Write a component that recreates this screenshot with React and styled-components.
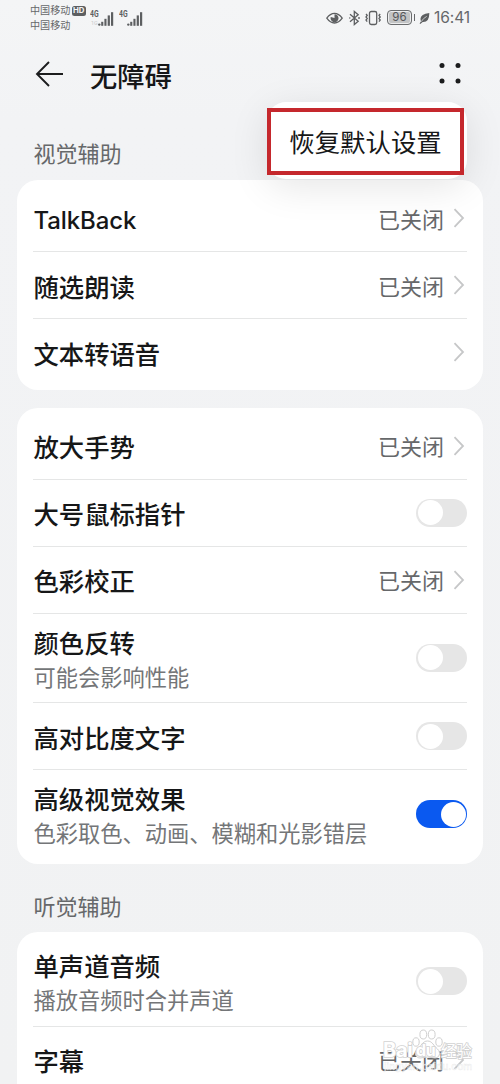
import React from 'react';
import styled, { createGlobalStyle } from 'styled-components';

const GlobalStyle = createGlobalStyle`
  * { box-sizing: border-box; }
  html, body { margin: 0; padding: 0; }
  body {
    width: 500px;
    height: 1084px;
    overflow: hidden;
    background: #f2f3f4;
    color: #161718;
    font-family: 'Noto Sans CJK SC', sans-serif;
  }
`;

const Screen = styled.main`
  position: relative;
  display: flex;
  flex-direction: column;
  width: 500px;
  height: 1084px;
  overflow: hidden;
  background: linear-gradient(180deg, #f4f5f6 0, #f2f3f5 120px, #f1f2f3 100%);
`;

const StatusBar = styled.header`
  display: flex;
  flex: none;
  justify-content: space-between;
  height: 36px;
  padding: 2px 28px 0 30px;
  color: #66686a;
`;

const StatusLeft = styled.div`
  display: flex;
  align-items: flex-start;
`;

const Carriers = styled.div`
  display: flex;
  flex-direction: column;
  font-size: 10.1px;
  line-height: 15.3px;
  width: 42px;
`;

const HdBadge = styled.span`
  flex: none;
  width: 13.5px;
  height: 9.5px;
  margin-top: 4px;
  border-radius: 2.5px;
  background: #5d5f61;
  color: #f4f5f6;
  font: 700 7.8px/9.5px Inter, sans-serif;
  text-align: center;
`;

const Signal = styled.svg`
  flex: none;
  width: 25px;
  height: 17px;
  margin: 7px 0 0 ${(p) => p.$gap}px;
`;

const StatusRight = styled.div`
  display: flex;
  align-items: center;
  height: 31px;
`;

const StatusIcon = styled.svg`
  flex: none;
  width: ${(p) => p.$w}px;
  height: 16px;
  margin-right: ${(p) => p.$gap}px;
`;

const Battery = styled.span`
  position: relative;
  width: 25px;
  height: 15px;
  margin-right: 7px;
  border: 1.3px solid #6a6c6e;
  border-radius: 4px;
  background: #c3c4c5;
  box-shadow: inset 0 0 0 1px #ecedee;
  color: #55575a;
  font: 400 11.5px/13px Inter, sans-serif;
  text-align: center;

  &::after {
    content: '';
    position: absolute;
    right: -4.2px;
    top: 3px;
    width: 1.7px;
    height: 6.5px;
    background: #66686a;
  }
`;

const Clock = styled.time`
  width: 38px;
  font: 400 15.6px/16px Inter, sans-serif;
  letter-spacing: -0.1px;
  white-space: nowrap;
`;

const TitleBar = styled.div`
  display: flex;
  flex: none;
  align-items: center;
  height: 77px;
  padding: 0 38px 0 35px;
`;

const BackIcon = styled.svg`
  width: 29px;
  height: 28px;
  margin-top: -1px;
`;

const PageTitle = styled.h1`
  flex: 1;
  margin: 0 0 0 26px;
  font-size: 27.3px;
  font-weight: 500;
  line-height: 40px;
`;

const MoreIcon = styled.svg`
  width: 24px;
  height: 24px;
  margin-bottom: 3px;
`;

const SectionTitle = styled.h2`
  display: flex;
  flex: none;
  align-items: flex-start;
  height: ${(p) => p.$height}px;
  margin: 0;
  padding: ${(p) => p.$top}px 34px 0 33.5px;
  color: #66686a;
  font-size: 22px;
  font-weight: 400;
  line-height: 32px;
`;

const Card = styled.section`
  flex: none;
  margin: 0 17px ${(p) => p.$gap || 0}px;
  padding: 5px 16px ${(p) => (p.$continues ? 40 : 4)}px;
  border-radius: 21px;
  background: #fff;
`;

const Row = styled.div`
  display: flex;
  align-items: center;
  justify-content: space-between;
  height: ${(p) => (p.$tall ? 89.5 : 66.9)}px;
  border-bottom: 1px solid #e5e6e6;

  &:last-child { border-bottom-color: transparent; }
`;

const Labels = styled.div`
  display: flex;
  flex-direction: column;
  padding: 1px 0 0 0.5px;
`;

const Label = styled.span`
  font-size: 25.35px;
  font-weight: 500;
  line-height: 36px;
  white-space: nowrap;
`;

const LatinLabel = styled(Label)`
  font-family: Inter, sans-serif;
  font-size: 24px;
  letter-spacing: -0.1px;
  padding-top: 5px;
`;

const Hint = styled.span`
  color: #747678;
  font-size: 22.25px;
  line-height: 33px;
  white-space: nowrap;
`;

const Value = styled.span`
  display: flex;
  align-items: center;
  padding-bottom: 1px;
  color: #66686a;
  font-size: 22px;
  line-height: 32px;
`;

const ChevronIcon = styled.svg`
  width: 12px;
  height: 20px;
  margin: 1px 2px 0 9px;
`;

const Track = styled.span`
  display: flex;
  justify-content: ${(p) => (p.$on ? 'flex-end' : 'flex-start')};
  width: 51px;
  height: 28px;
  padding: 1.5px;
  border-radius: 14px;
  background: ${(p) => (p.$on ? '#0a59f0' : '#e6e6e6')};
`;

const Thumb = styled.span`
  width: 25px;
  height: 25px;
  border-radius: 50%;
  background: #fff;
`;

const Menu = styled.div`
  position: absolute;
  left: 267px;
  top: 102px;
  width: 200px;
  height: 77px;
  border-radius: 19px;
  background: #fff;
  box-shadow: 0 8px 38px rgba(0, 0, 0, 0.1);
`;

const MenuItem = styled.div`
  display: flex;
  align-items: center;
  justify-content: center;
  width: 197px;
  height: 67px;
  margin-top: 6px;
  padding-bottom: 2px;
  border: 4px solid #c5282d;
  background: #fff;
  font-size: 25.4px;
  line-height: 36px;
`;

const Watermark = styled.div`
  position: absolute;
  left: 383px;
  top: 1028px;
  width: 92px;
  height: 46px;
  color: #fff;
`;

const Mark = styled.div`
  position: relative;
  display: grid;
  grid-template-columns: 33px 25px 34px;
  align-items: center;
  height: 22px;
  margin-top: 11px;
  font: 700 20px/22px Inter, sans-serif;
  letter-spacing: -0.3px;
  paint-order: stroke fill;
  -webkit-text-stroke: 1.6px #d2d2d2;
  white-space: nowrap;
`;

const MarkPaw = styled.svg`
  position: absolute;
  left: 29px;
  top: 1px;
  width: 31px;
  height: 30px;
`;

const MarkCjk = styled.span`
  font: 400 15.5px/22px 'Noto Sans CJK SC', sans-serif;
`;

const MarkDu = styled.span`
  font-size: 16px;
`;

const MarkUrl = styled.div`
  padding-left: 1px;
  color: rgba(255, 255, 255, 0.55);
  font: 500 10px/11px Inter, sans-serif;
  -webkit-text-stroke: 0.4px rgba(225, 225, 225, 0.7);
`;

const Bars = ({ gap, faint }) => (
  <Signal $gap={gap} viewBox="0 0 25 17" fill="#5d5f61">
    <text x="0" y="8.4" fontFamily="Roboto, sans-serif" fontWeight="700" fontSize="8.8" textLength="8.6" lengthAdjust="spacingAndGlyphs">4G</text>
    {faint && (
      <text x="1" y="15.5" fontFamily="Roboto, sans-serif" fontSize="5.5" fill="#c9cacb">1G</text>
    )}
    <circle cx="9.3" cy="15.6" r="1.2" />
    <rect x="11.2" y="12.8" width="2.1" height="4" />
    <rect x="14.4" y="9.8" width="2.1" height="7" />
    <rect x="17.7" y="6.4" width="2.2" height="10.4" />
    <rect x="21" y="3.2" width="2.2" height="13.6" />
  </Signal>
);

const EyeIcon = () => (
  <StatusIcon $w={17} $gap={5} viewBox="0 0 17 16" fill="none">
    <path d="M.8 8.2Q4.2 3.4 8.5 3.4T16.2 8.2Q12.8 13 8.5 13T.8 8.2Z" stroke="#5d5f61" strokeWidth="1.3" />
    <path d="M8.5 4.2A4 4 0 1 1 4.7 7.1L8.5 8Z" fill="#5d5f61" />
  </StatusIcon>
);

const BluetoothIcon = () => (
  <StatusIcon $w={13} $gap={3} viewBox="0 0 13 16" fill="none" stroke="#5d5f61" strokeWidth="1.3">
    <path d="M2 4.2 10.2 11.3 6.3 14.6V1.4L10.2 4.7 2 11.8" />
    <circle cx="1.8" cy="8" r=".7" fill="#5d5f61" stroke="none" />
    <circle cx="11" cy="8" r=".9" fill="#5d5f61" stroke="none" />
  </StatusIcon>
);

const VibrateIcon = () => (
  <StatusIcon $w={18} $gap={5} viewBox="0 0 18 16" fill="none" stroke="#5d5f61" strokeWidth="1.3">
    <rect x="5.5" y="1.5" width="7.2" height="13" rx="1.8" />
    <path d="M2 4l1.2 1.4L2 7l1.2 1.5L2 10l1.2 1.6M16.2 4 15 5.4 16.2 7 15 8.5 16.2 10 15 11.6" />
  </StatusIcon>
);

const LeafIcon = () => (
  <StatusIcon $w={11} $gap={4} viewBox="0 0 11 16">
    <path d="M10.3 3Q10.5 12.4 3.7 12L1.2 14 .6 13.5 2 11.3Q-.6 4.4 10.3 3Z" fill="#5d5f61" />
    <path d="M2.2 11.7Q4.2 8.2 7.7 6.4" fill="none" stroke="#f3f4f5" strokeWidth=".7" />
  </StatusIcon>
);

const Chevron = () => (
  <ChevronIcon viewBox="0 0 12 20" fill="none" stroke="#c6c7c8" strokeWidth="1.8">
    <path d="M1.5 1.2 10 10 1.5 18.8" />
  </ChevronIcon>
);

const Setting = ({ label, latin, hint, value, link, on }) => {
  const Title = latin ? LatinLabel : Label;
  return (
    <Row $tall={Boolean(hint)}>
      <Labels>
        <Title>{label}</Title>
        {hint && <Hint>{hint}</Hint>}
      </Labels>
      {link ? (
        <Value>
          {value}
          <Chevron />
        </Value>
      ) : (
        <Track $on={on}>
          <Thumb />
        </Track>
      )}
    </Row>
  );
};

export default function App() {
  return (
    <Screen>
      <GlobalStyle />
      <StatusBar>
        <StatusLeft>
          <Carriers>
            <span>中国移动</span>
            <span>中国移动</span>
          </Carriers>
          <HdBadge>HD</HdBadge>
          <Bars gap={4.5} faint />
          <Bars gap={3.5} />
        </StatusLeft>
        <StatusRight>
          <EyeIcon />
          <BluetoothIcon />
          <VibrateIcon />
          <Battery>96</Battery>
          <LeafIcon />
          <Clock>16:41</Clock>
        </StatusRight>
      </StatusBar>

      <TitleBar>
        <BackIcon viewBox="0 0 29 28" fill="none" stroke="#1c1d1e" strokeWidth="1.9">
          <path d="M28 14H2M14 2 2 14 14 26" />
        </BackIcon>
        <PageTitle>无障碍</PageTitle>
        <MoreIcon viewBox="0 0 24 24" fill="#1c1d1e">
          <circle cx="4" cy="4.5" r="2.5" />
          <circle cx="20" cy="4.5" r="2.5" />
          <circle cx="4" cy="20" r="2.5" />
          <circle cx="20" cy="20" r="2.5" />
        </MoreIcon>
      </TitleBar>

      <SectionTitle $height={67.3} $top={23}>视觉辅助</SectionTitle>
      <Card $gap={18}>
        <Setting label="TalkBack" latin link value="已关闭" />
        <Setting label="随选朗读" link value="已关闭" />
        <Setting label="文本转语音" link />
      </Card>
      <Card>
        <Setting label="放大手势" link value="已关闭" />
        <Setting label="大号鼠标指针" />
        <Setting label="色彩校正" link value="已关闭" />
        <Setting label="颜色反转" hint="可能会影响性能" />
        <Setting label="高对比度文字" />
        <Setting label="高级视觉效果" hint="色彩取色、动画、模糊和光影错层" on />
      </Card>

      <SectionTitle $height={68.6} $top={25}>听觉辅助</SectionTitle>
      <Card $continues>
        <Setting label="单声道音频" hint="播放音频时合并声道" />
        <Setting label="字幕" link value="已关闭" />
      </Card>

      <Menu>
        <MenuItem>恢复默认设置</MenuItem>
      </Menu>

      <Watermark>
        <MarkPaw viewBox="0 0 31 30" fill="#fff" stroke="#cfcfcf" strokeWidth="1">
          <ellipse cx="4" cy="13" rx="3.2" ry="4.2" />
          <ellipse cx="11.3" cy="5.5" rx="3.4" ry="4.5" />
          <ellipse cx="19.7" cy="5.5" rx="3.4" ry="4.5" />
          <ellipse cx="27" cy="13" rx="3.2" ry="4.2" />
          <path d="M15.5 12C10.5 12 9.5 17 5.5 20C1.5 24 4 29 8 29Q15.5 27 23 29C27 29 29.5 24 25.5 20C21.5 17 20.5 12 15.5 12Z" />
        </MarkPaw>
        <Mark>
          <span>Bai</span>
          <MarkDu>du</MarkDu>
          <MarkCjk>经验</MarkCjk>
        </Mark>
        <MarkUrl>jingyan.baidu.com</MarkUrl>
      </Watermark>
    </Screen>
  );
}
